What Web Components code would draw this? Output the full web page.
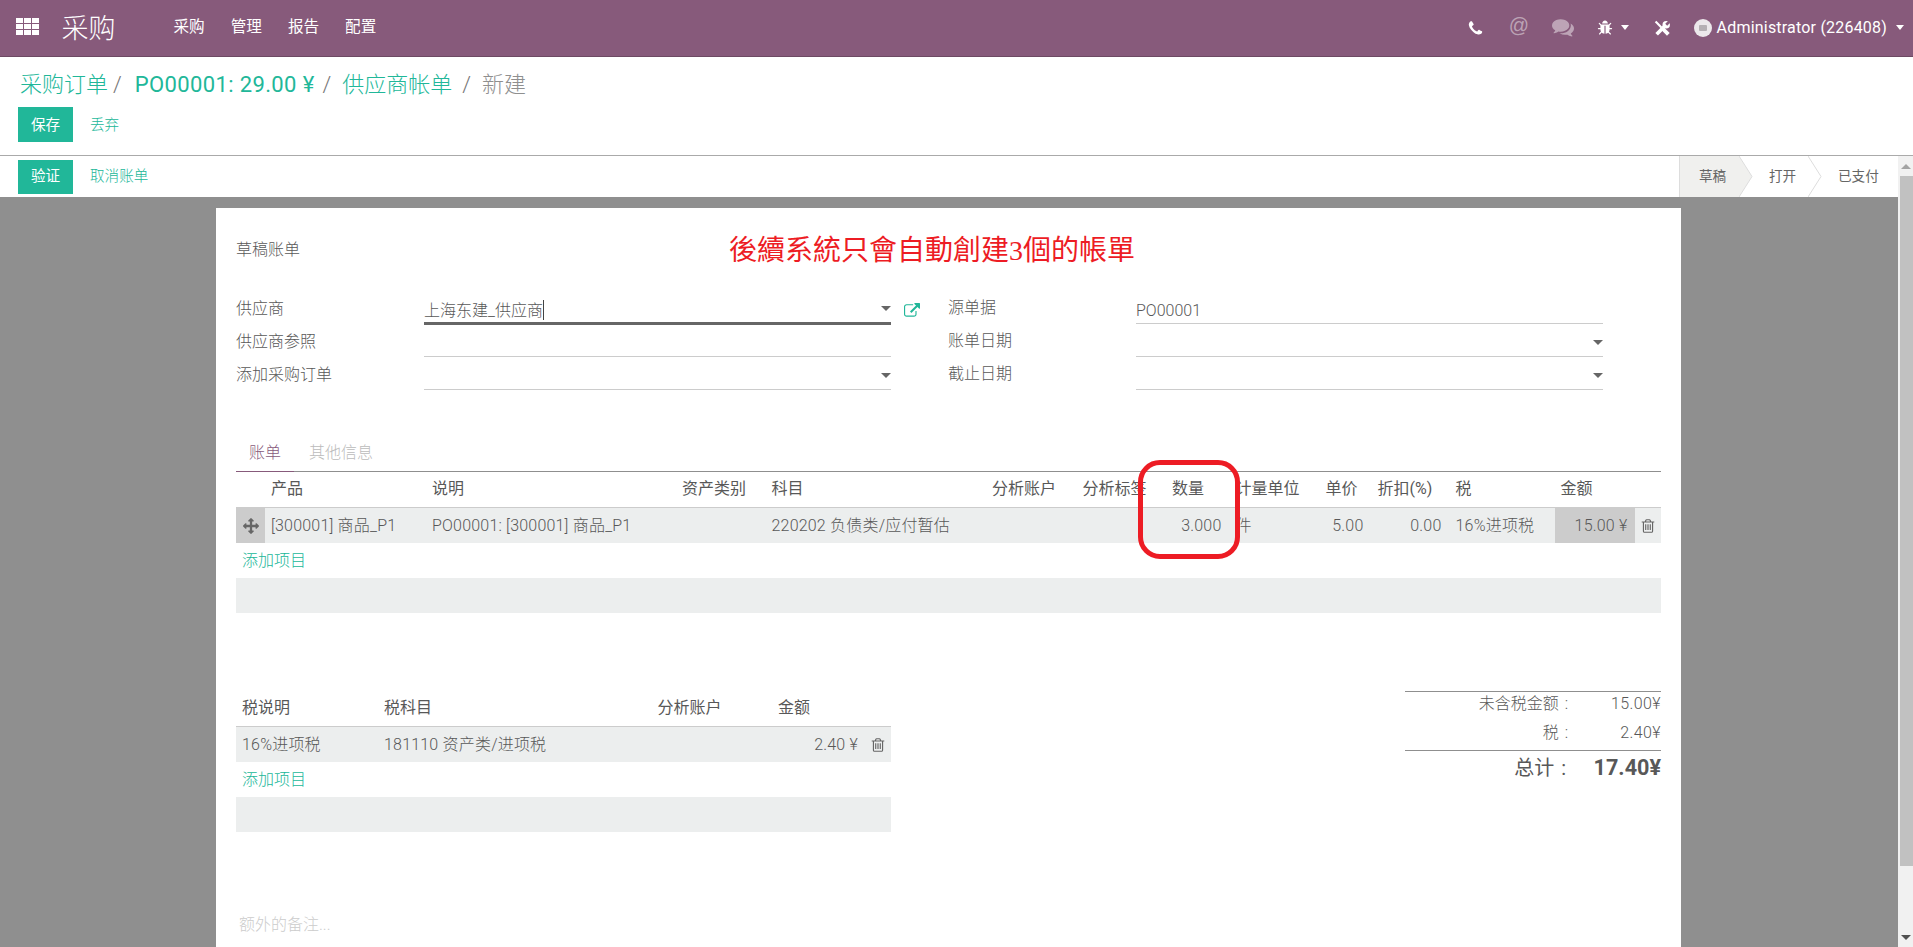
<!DOCTYPE html>
<html lang="zh"><head><meta charset="utf-8"><title>采购</title>
<style>
html,body{margin:0;height:947px;overflow:hidden;background:#fff}
body{font:300 16px/1.4 Roboto,"Noto Sans CJK SC",sans-serif;color:#585858}
</style></head><body>
<o-app></o-app>
<script>
const ICON={
phone:'M1600 1240q0 27-10 70.5t-21 68.5q-21 50-122 106-94 51-186 51-27 0-53-3.5t-57.5-12.5-47-14.5-55.5-20.5-49-18q-98-35-175-83-127-79-264-216t-216-264q-48-77-83-175-3-9-18-49t-20.5-55.5-14.5-47-12.5-57.5-3.5-53q0-92 51-186 56-101 106-122 25-11 68.5-21t70.5-10q14 0 21 3 18 6 53 76 11 19 30 54t35 63.5 31 53.5q3 4 17.5 25t21.5 35.5 7 28.5q0 20-28.5 50t-62 55-62 53-28.5 46q0 9 5 22.5t8.5 20.5 14 24 11.5 19q76 137 174 235t235 174q2 1 19 11.5t24 14 20.5 8.5 22.5 5q18 0 46-28.5t53-62 55-62 50-28.5q14 0 28.5 7t35.5 21.5 25 17.5q25 15 53.5 31t63.5 35 54 30q70 35 76 53 3 7 3 21z',
trash:'M704 736v576q0 14-9 23t-23 9h-64q-14 0-23-9t-9-23v-576q0-14 9-23t23-9h64q14 0 23 9t9 23zm256 0v576q0 14-9 23t-23 9h-64q-14 0-23-9t-9-23v-576q0-14 9-23t23-9h64q14 0 23 9t9 23zm256 0v576q0 14-9 23t-23 9h-64q-14 0-23-9t-9-23v-576q0-14 9-23t23-9h64q14 0 23 9t9 23zm128 724v-948h-896v948q0 22 7 40.5t14.5 27 10.5 8.5h832q3 0 10.5-8.5t14.5-27 7-40.5zm-672-1076h448l-48-117q-7-9-17-11h-317q-10 2-17 11zm928 32v64q0 14-9 23t-23 9h-96v948q0 83-47 143.5t-113 60.5h-832q-66 0-113-58.5t-47-141.5v-952h-96q-14 0-23-9t-9-23v-64q0-14 9-23t23-9h309l70-167q15-37 54-63t79-26h320q40 0 79 26t54 63l70 167h309q14 0 23 9t9 23z',
arrows:'M1792 896q0 26-19 45l-256 256q-19 19-45 19t-45-19-19-45v-128h-384v384h128q26 0 45 19t19 45-19 45l-256 256q-19 19-45 19t-45-19l-256-256q-19-19-19-45t19-45 45-19h128v-384h-384v128q0 26-19 45t-45 19-45-19l-256-256q-19-19-19-45t19-45l256-256q19-19 45-19t45 19 19 45v128h384v-384h-128q-26 0-45-19t-19-45 19-45l256-256q19-19 45-19t45 19l256 256q19 19 19 45t-19 45-45 19h-128v384h384v-128q0-26 19-45t45-19 45 19l256 256q19 19 19 45z',
ext:'M1408 928v320q0 119-84.5 203.5t-203.5 84.5h-832q-119 0-203.5-84.5t-84.5-203.5v-832q0-119 84.5-203.5t203.5-84.5h704q14 0 23 9t9 23v64q0 14-9 23t-23 9h-704q-66 0-113 47t-47 113v832q0 66 47 113t113 47h832q66 0 113-47t47-113v-320q0-14 9-23t23-9h64q14 0 23 9t9 23zm384-864v512q0 26-19 45t-45 19-45-19l-176-176-652 652q-10 10-23 10t-23-10l-114-114q-10-10-10-23t10-23l652-652-176-176q-19-19-19-45t19-45 45-19h512q26 0 45 19t19 45z',
comments:'M1408 768q0 139-94 257t-256.5 186.5-353.5 68.5q-86 0-176-16-124 88-278 128-36 9-86 16h-3q-11 0-20.5-8t-11.5-21q-1-3-1-6.5t.5-6.5 2-6l2.5-5 3.5-5.5 4-5 4.5-5 4-4.5q5-6 23-25t26-29.5 22.5-29 25-38.5 20.5-44q-124-72-195-177t-71-224q0-139 94-257t256.5-186.5 353.5-68.5 353.5 68.5 256.5 186.5 94 257zm384 256q0 120-71 224.5t-195 176.5q10 24 20.5 44t25 38.5 22.5 29 26 29.5 23 25q1 1 4 4.5t4.5 5 4 5 3.5 5.5l2.5 5 2 6 .5 6.5-1 6.5q-3 14-13 22t-22 7q-50-7-86-16-154-40-278-128-90 16-176 16-271 0-472-132 58 4 88 4 161 0 309-45t264-129q125-92 192-212t67-254q0-77-23-152 129 71 204 178t75 230z',
bug:'M1696 960q0 26-19 45t-45 19h-224q0 171-67 290l208 209q19 19 19 45t-19 45q-18 19-45 19t-45-19l-198-197q-5 5-15 13t-42 28.5-65 36.5-82 29-97 13v-896h-128v896q-51 0-101.5-13.5t-87-33-66-39-43.5-32.5l-15-14-183 207q-20 21-48 21-24 0-43-16-19-18-20.5-44.5t15.5-46.5l202-227q-58-114-58-274h-224q-26 0-45-19t-19-45 19-45 45-19h224v-294l-173-173q-19-19-19-45t19-45 45-19 45 19l173 173h844l173-173q19-19 45-19t45 19 19 45-19 45l-173 173v294h224q26 0 45 19t19 45zm-480-576h-640q0-133 93.5-226.5t226.5-93.5 226.5 93.5 93.5 226.5z'
};
const svg=(n,s,c='currentColor',extra='')=>`<svg width="${s}" height="${s}" viewBox="0 0 1792 1792" style="display:block;${extra}"><path fill="${c}" d="${ICON[n]}"/></svg>`;
function def(name,html,init){
  customElements.define(name,class extends HTMLElement{
    constructor(){super();const r=this.attachShadow({mode:'open'});
      r.innerHTML=typeof html==='function'?html(this):html;}
    connectedCallback(){
      if(typeof html==='function'){this.shadowRoot.innerHTML=html(this);}
      if(init)init(this);
    }
  });
}
const caret=`display:inline-block;width:0;height:0;border-left:4.5px solid transparent;border-right:4.5px solid transparent;border-top:5px solid currentColor`;

def('o-navbar',`<style>
:host{display:flex;align-items:center;height:56px;background:#875A7B;border-bottom:1px solid #6d4a63;color:#fff;box-sizing:content-box;font-size:15.6px;font-weight:400}
.grid{display:grid;grid-template-columns:repeat(3,6.5px);gap:1.4px 1.5px;margin:-3px 0 0 16px}
.grid i{display:block;height:5px;background:#fff}
.brand{font-size:27px;font-weight:300;margin:1px 0 0 23px;line-height:36px;width:112px}
.menu{display:flex;gap:26px}
.right{margin-left:auto;display:flex;align-items:center}
.car{${caret};color:#fff}
.at{font-size:20px;line-height:20px;color:rgba(255,255,255,.45);margin:-6px 0 0 25px;font-family:"Liberation Sans",sans-serif;font-weight:400}
.ava{width:18px;height:18px;border-radius:50%;background:#ece8eb;display:flex;align-items:center;justify-content:center;margin:1px 5px 0 23px}
.ava i{width:8px;height:6px;background:#b5b0b4;border-radius:1px}
.name{font-size:16px;letter-spacing:.2px}
</style>
<div class="grid">${'<i></i>'.repeat(9)}</div>
<div class="brand">采购</div>
<div class="menu"><span>采购</span><span>管理</span><span>报告</span><span>配置</span></div>
<div class="right">
${svg('phone',17,'#fff','margin-top:2px')}
<span class="at">@</span>
${svg('comments',22,'rgba(255,255,255,.45)','margin:-2px 0 0 22.500px')}
${svg('bug',16,'#fff','margin:0 0 0 23px')}
<i class="car" style="margin-left:8px"></i>
<svg width="17" height="17" viewBox="0 0 16 16" style="display:block;margin:2px 0 0 25px" fill="none" stroke="#fff"><path d="M1.500 1.500L7 7" stroke-width="2"/><path d="M8 8l5.500 5.500" stroke-width="3.600"/><path d="M2.500 13.500L10.500 5.500" stroke-width="3.400"/><circle cx="11.500" cy="4.500" r="3.500" fill="#fff" stroke="none"/><path d="M11.500 4.500L15.500 .5" stroke="#875A7B" stroke-width="2.600"/></svg>
<span class="ava"><i></i></span>
<span class="name" style="margin-right:9px">Administrator (226408)</span>
<i class="car" style="margin-right:9px"></i>
</div>`);

def('o-btn',`<style>
:host{display:inline-flex;align-items:center;justify-content:center;box-sizing:border-box;height:var(--h,35px);padding-top:var(--p,2px);width:55px;background:#21B799;color:#fff;font-size:14.6px;line-height:1;font-weight:400}
</style><slot></slot>`);

def('o-control-panel',`<style>
:host{display:block;border-bottom:1px solid #aaa;padding:15px 0 0 18px;box-sizing:content-box;height:83px}
.crumbs{display:flex;align-items:center;font-size:22px;line-height:24px;color:#21B799;margin:0 0 11px 2px;height:24px;padding-top:1px;box-sizing:border-box}
.sep{color:#777;margin:0 13px 0 5px}
.po{letter-spacing:.37px;font-weight:400}
.cur{color:#8f8f8f}
.row{display:flex;align-items:center}
a{color:#21B799;margin-left:17px;font-size:14.6px;padding-top:2px}
</style>
<div class="crumbs"><span>采购订单</span><span class="sep">/</span><span class="po">PO00001: 29.00 ¥</span><span class="sep" style="margin:0 11px 0 8px">/</span><span>供应商帐单</span><span class="sep" style="margin:0 11px 0 10px">/</span><span class="cur">新建</span></div>
<div class="row"><o-btn>保存</o-btn><a>丢弃</a></div>`);

def('o-statusbar',`<style>
:host{display:flex;align-items:center;height:41px;background:#fff;padding-left:18px}
a{color:#21B799;margin-left:17px;font-size:14.6px}
.st{margin-left:auto;display:flex;height:41px;font-size:13.6px;line-height:41px;color:#666;font-weight:400}
.s{position:relative;display:block;box-sizing:border-box}
.s svg{position:absolute;left:100%;top:0;z-index:1}
.a{background:#f0f0ee;border-left:1px solid #ddd;padding-left:19px;width:60px}
.b{padding-left:30px;width:69px}
.c{padding-left:30px;width:90px}
</style>
<o-btn style="--h:34px;--p:0">验证</o-btn><a>取消账单</a>
<div class="st">
<span class="s a">草稿<svg width="14" height="41"><path d="M0 0L13 20.500 0 41z" fill="#f0f0ee"/><path d="M0 0L13 20.500 0 41" fill="none" stroke="#ddd"/></svg></span>
<span class="s b">打开<svg width="14" height="41"><path d="M0 0L13 20.500 0 41" fill="#fff" stroke="#ddd"/></svg></span>
<span class="s c">已支付</span>
</div>`);

def('o-field',h=>`<style>
:host{display:grid;grid-template-columns:188px 467px;height:33px}
.l{align-self:start;margin-top:var(--lt,8px);line-height:20px}
.v{position:relative;box-sizing:border-box;border-bottom:1px solid #ccc;display:flex;align-items:flex-end;padding-bottom:1px;line-height:22px}
:host([focus]) .v{border-bottom:3px solid #666;padding-bottom:0;height:34px;}
.car{${caret};color:#666;position:absolute;right:0;top:16px;border-left-width:5px;border-right-width:5px}
:host([focus]) .car{top:15px}
.cur{display:inline-block;width:1px;height:20px;background:#444;vertical-align:-4px}
</style>
<div class="l">${h.getAttribute('label')}</div>
<div class="v"><span><slot></slot>${h.hasAttribute('focus')?'<i class="cur"></i>':''}</span>${h.hasAttribute('drop')?'<i class="car"></i>':''}</div>`);

const gridRow=(cols,cls,cells)=>`<div class="${cls}" style="grid-template-columns:${cols}">${cells.map(c=>{const [t,k]=Array.isArray(c)?c:[c,''];return `<div class="c ${k}">${t}</div>`}).join('')}</div>`;
const tableCss=`
:host{display:block}
.h,.r,.add{display:grid;align-items:center}
.h{height:35px;border-bottom:1px solid #ccc;font-weight:400}
.r{height:35px;background:#eceeee;align-items:stretch;letter-spacing:.2px}
.r .c{padding-top:1px}
.c{padding:0 6px;white-space:nowrap;display:flex;align-items:center;overflow:hidden}
.num{justify-content:flex-end;padding-right:var(--np,8px)}
.g{background:#ccc;padding:0;justify-content:center}
.add{height:35px;color:#21B799;display:flex;align-items:center;padding:2px 0 0 6px;box-sizing:border-box}
.e{height:35px;background:#eceeee}
.gr{background:#ccc;padding-right:7px}
.r .t,.r .g{padding:0;justify-content:center}
`;
const COLS='29px 161px 250px 89.500px 220.500px 90.500px 89.500px 63.500px 90px 52px 78px 105px 80px 27px';
def('o-lines',`<style>${tableCss}</style>`+
gridRow(COLS,'h',['','产品','说明','资产类别','科目','分析账户','分析标签','数量','计量单位','单价','折扣(%)','税','金额',''])+
gridRow(COLS,'r',[[svg('arrows',16,'#666'),'g'],'[300001] 商品_P1','PO00001: [300001] 商品_P1','','220202 负债类/应付暂估','','',['3.000','num'],'件',['5.00','num'],['0.00','num'],'16%进项税',['15.00 ¥','num gr'],[svg('trash',16,'#666'),'t']])+
`<div class="add">添加项目</div><div class="e"></div>`);
const TC='142px 273.500px 120.500px 92px 27px';
def('o-taxes',`<style>${tableCss}
:host{width:655px;--np:6px}
</style>`+
gridRow(TC,'h',['税说明','税科目','分析账户','金额',''])+
gridRow(TC,'r',['16%进项税','181110 资产类/进项税','',['2.40 ¥','num'],[svg('trash',16,'#666'),'t']])+
`<div class="add">添加项目</div><div class="e"></div>`);

def('o-totals',`<style>
:host{display:block;width:256px;margin-left:auto}
.g{display:grid;grid-template-columns:163px 93px;align-items:center;border-top:1px solid #8f8f8f}
.g>*{height:29px;line-height:23px;text-align:right;white-space:nowrap}
.g>:nth-child(odd){word-spacing:2px}
.g>:nth-child(even){letter-spacing:.4px}
.g.big>*{height:34px;line-height:34px;letter-spacing:0}
.big span{font-size:20px;word-spacing:4px;font-weight:400;padding-right:2px}
.big b{font-weight:700;font-size:21.6px}
</style>
<div class="g"><span>未含税金额 :</span><span>15.00¥</span><span>税 :</span><span>2.40¥</span></div>
<div class="g big"><span>总计 :</span><b>17.40¥</b></div>`);

def('o-sheet',`<style>
:host{display:block;position:relative;box-sizing:border-box;width:1465px;height:780px;margin:11px 0 0 216px;background:#fff;padding:0 20px}
.title{display:flex;align-items:center;height:83px}
.title>span:first-child{padding-top:1px;width:64px}
.red{font:28px/36px "Liberation Serif","Noto Sans CJK TC",serif;color:#ED1C24;margin-left:429px;white-space:nowrap;padding-top:3px}
.form{display:flex}
.left{width:712px;position:relative}
.right{--lt:7px}
.ext{position:absolute;left:668px;top:12px;color:#21B799}
.tabs{display:flex;margin-top:44px;height:37px;border-bottom:1px solid #8f8f8f}
.tab{padding:0 13px;line-height:38px;color:#bbb;margin-right:2px;position:relative}
.tab.on{color:#875A7B;margin-right:2px}
.tab.on::after{content:"";position:absolute;left:0;right:0;bottom:-1px;height:1px;background:#875A7B}
.foot{display:flex;margin-top:78px}
.note{margin:82px 0 0 3px;color:#ccc;line-height:22px}
.ring{position:absolute;left:922px;top:252px;width:102px;height:99px;box-sizing:border-box;border:5px solid #ED1C24;border-radius:22px}
</style>
<div class="title"><span>草稿账单</span><span class="red">後續系統只會自動創建3個的帳單</span></div>
<div class="form">
<div class="left">
<o-field label="供应商" drop focus>上海东建_供应商</o-field>
<o-field label="供应商参照"></o-field>
<o-field label="添加采购订单" drop></o-field>
<span class="ext">${svg('ext',16)}</span>
</div>
<div class="right">
<o-field label="源单据">PO00001</o-field>
<o-field label="账单日期" drop></o-field>
<o-field label="截止日期" drop></o-field>
</div>
</div>
<div class="tabs"><span class="tab on">账单</span><span class="tab">其他信息</span></div>
<o-lines></o-lines>
<div class="foot"><o-taxes></o-taxes><o-totals></o-totals></div>
<div class="note">额外的备注...</div>
<div class="ring"></div>`);

def('o-scrollbar',`<style>
:host{display:flex;flex-direction:column;width:15px;background:#f1f1f1;position:relative;align-items:flex-end}
.u,.d{width:15px;height:20px;display:flex;align-items:center;justify-content:center;flex:none}
.u i{border-left:5px solid transparent;border-right:5px solid transparent;border-bottom:5px solid #a3a3a3}
.d i{border-left:5px solid transparent;border-right:5px solid transparent;border-top:5px solid #505050}
.th{width:13px;height:690px;background:#c1c1c1}
.sp{flex:1}
</style><div class="u"><i></i></div><div class="th"></div><div class="sp"></div><div class="d"><i></i></div>`);

def('o-app',`<style>
:host{display:flex;flex-direction:column;height:947px;overflow:hidden}
.body{flex:1;display:flex;min-height:0}
.main{flex:1;display:flex;flex-direction:column;min-width:0}
.scroll{flex:1;background:#8f8f8f;overflow:hidden;min-height:0}
</style>
<o-navbar></o-navbar><o-control-panel></o-control-panel>
<div class="body"><div class="main"><o-statusbar></o-statusbar><div class="scroll"><o-sheet></o-sheet></div></div><o-scrollbar></o-scrollbar></div>`);
</script></body></html>
